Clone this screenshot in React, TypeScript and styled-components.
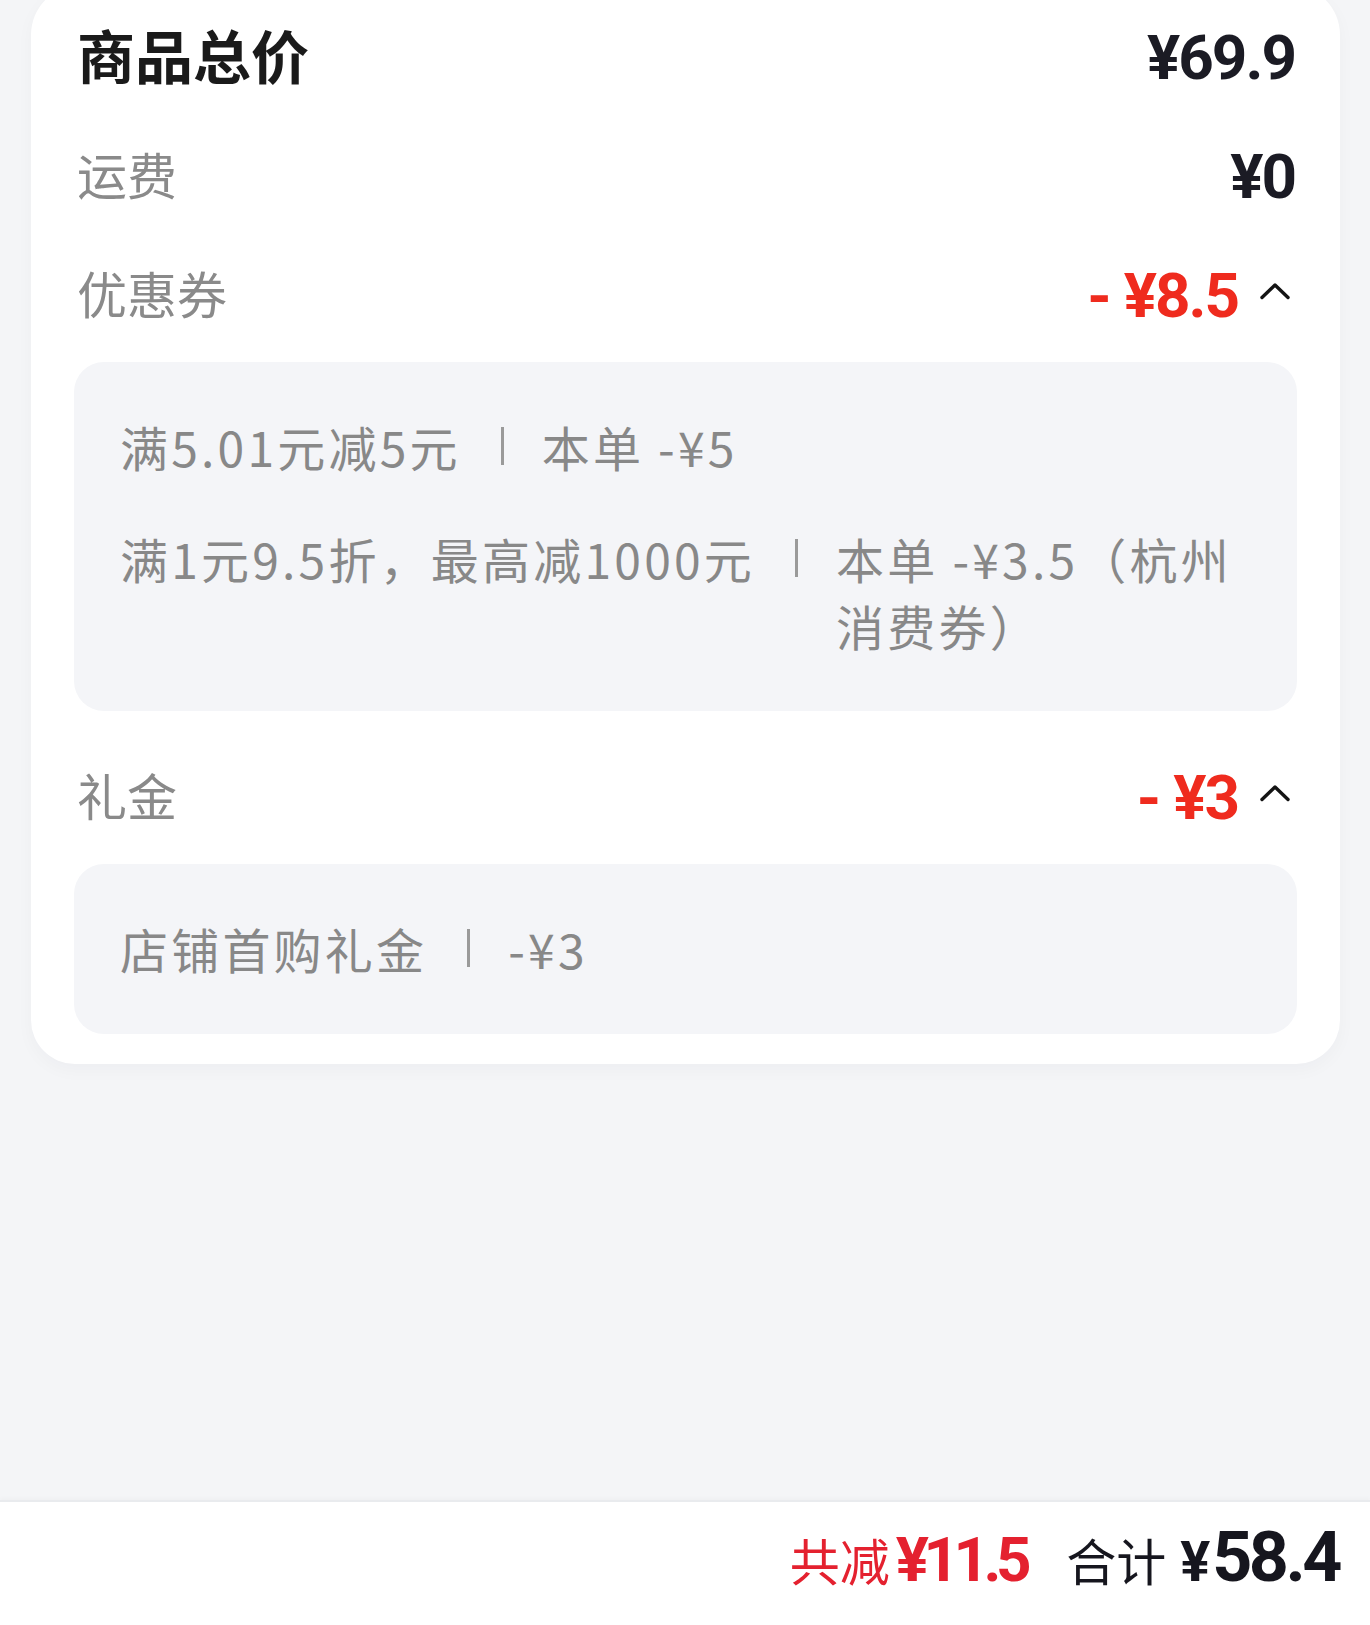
import React from 'react'
import styled, { createGlobalStyle } from 'styled-components'

const GlobalStyle = createGlobalStyle`
  html, body {
    margin: 0;
    padding: 0;
    background: #f4f5f7;
  }
  body {
    font-family: 'Noto Sans CJK SC', 'Noto Sans', sans-serif;
    -webkit-font-smoothing: antialiased;
  }
`

const Page = styled.div`
  display: flex;
  flex-direction: column;
  min-height: 1625px;
  overflow: hidden;
`

const Card = styled.div`
  display: flex;
  flex-direction: column;
  gap: 47px;
  margin: -15px 30px 0 31px;
  padding: 33px 43px 30px;
  background: #ffffff;
  border-radius: 0 0 44px 44px;
  border-top-left-radius: 50px;
  border-top-right-radius: 50px;
  box-shadow: 0 6px 18px rgba(20, 30, 60, 0.03);
`

const Section = styled.div`
  display: flex;
  flex-direction: column;
  gap: 34px;
`

const Row = styled.div`
  display: flex;
  align-items: center;
  justify-content: space-between;
  height: 72px;
  padding: 0 2px 0 3px;
`

const Label = styled.span<{ $strong?: boolean }>`
  font-family: 'Noto Sans CJK SC', sans-serif;
  font-size: ${({ $strong }) => ($strong ? '58px' : '50px')};
  font-weight: ${({ $strong }) => ($strong ? 700 : 400)};
  color: ${({ $strong }) => ($strong ? '#1a1a1a' : '#8a8a8a')};
  line-height: 72px;
`

const Value = styled.div`
  display: flex;
  align-items: center;
`

const Price = styled.span<{ $red?: boolean }>`
  font-family: Roboto, 'Noto Sans', sans-serif;
  font-size: 62px;
  font-weight: 700;
  letter-spacing: -2px;
  line-height: 72px;
  padding-top: 7px;
  color: ${({ $red }) => ($red ? '#ef2b1e' : '#1b1b24')};
`

const Minus = styled.span`
  margin-right: 14px;
`

const Toggle = styled.span`
  display: flex;
  align-items: center;
  justify-content: center;
  width: 34px;
  margin: -2px 3px 0 20px;
`

const DetailBox = styled.div`
  display: flex;
  flex-direction: column;
  gap: 45px;
  padding: 51px 46px 52px;
  background: #f4f5f8;
  border-radius: 30px;
`

const DetailLine = styled.div`
  display: flex;
  align-items: flex-start;
  font-family: 'Noto Sans CJK SC', sans-serif;
  font-size: 48px;
  line-height: 67px;
  letter-spacing: 3.2px;
  color: #888888;
`

const RuleText = styled.span`
  flex-shrink: 0;
  white-space: nowrap;
`

const Divider = styled.span`
  flex-shrink: 0;
  width: 3px;
  height: 38px;
  margin: 14px 38px 0 40px;
  background: #9a9a9a;
`

const SaveText = styled.span`
  flex: 1;
  min-width: 0;
`

const Spacer = styled.div`
  flex: 1;
`

const BottomBar = styled.div`
  display: flex;
  align-items: baseline;
  justify-content: flex-end;
  height: 125px;
  box-sizing: border-box;
  padding: 14px 31px 0 0;
  background: #ffffff;
  border-top: 2px solid #e9ebee;
  box-shadow: 0 -2px 4px rgba(0, 0, 0, 0.025);
`

const SaveLabel = styled.span`
  font-family: 'Noto Sans CJK SC', sans-serif;
  font-size: 50px;
  color: #e4212f;
`

const SaveAmount = styled.span`
  font-family: Roboto, sans-serif;
  font-size: 62px;
  font-weight: 700;
  letter-spacing: -5.5px;
  color: #e4212f;
  margin-left: 6px;
`

const TotalLabel = styled.span`
  font-family: 'Noto Sans CJK SC', sans-serif;
  font-size: 50px;
  color: #16161e;
  margin-left: 40px;
`

const Yen = styled.span`
  font-family: Roboto, sans-serif;
  font-size: 56px;
  font-weight: 700;
  color: #16161e;
  margin-left: 14px;
`

const TotalAmount = styled.span`
  font-family: Roboto, sans-serif;
  font-size: 70px;
  font-weight: 700;
  letter-spacing: -3.5px;
  color: #16161e;
  margin-left: 2px;
`

const ChevronUp = () => (
  <svg width="32" height="18" viewBox="0 0 32 18" fill="none">
    <polyline
      points="3,15.5 16,3 29,15.5"
      stroke="#141414"
      strokeWidth="3.4"
      strokeLinecap="round"
      strokeLinejoin="round"
    />
  </svg>
)

const coupons = [
  { rule: '满5.01元减5元', save: '本单 -¥5' },
  { rule: '满1元9.5折，最高减1000元', save: '本单 -¥3.5（杭州消费券）' },
]

const gifts = [{ rule: '店铺首购礼金', save: '-¥3' }]

type Detail = { rule: string; save: string }

function DiscountSection({ label, amount, items }: { label: string; amount: string; items: Detail[] }) {
  return (
    <Section>
      <Row>
        <Label>{label}</Label>
        <Value>
          <Price $red>
            <Minus>-</Minus>¥{amount}
          </Price>
          <Toggle>
            <ChevronUp />
          </Toggle>
        </Value>
      </Row>
      <DetailBox>
        {items.map((item) => (
          <DetailLine key={item.rule}>
            <RuleText>{item.rule}</RuleText>
            <Divider />
            <SaveText>{item.save}</SaveText>
          </DetailLine>
        ))}
      </DetailBox>
    </Section>
  )
}

export default function App() {
  return (
    <Page>
      <GlobalStyle />
      <Card>
        <Row>
          <Label $strong>商品总价</Label>
          <Price>¥69.9</Price>
        </Row>
        <Row>
          <Label>运费</Label>
          <Price>¥0</Price>
        </Row>
        <DiscountSection label="优惠券" amount="8.5" items={coupons} />
        <DiscountSection label="礼金" amount="3" items={gifts} />
      </Card>
      <Spacer />
      <BottomBar>
        <SaveLabel>共减</SaveLabel>
        <SaveAmount>¥11.5</SaveAmount>
        <TotalLabel>合计</TotalLabel>
        <Yen>¥</Yen>
        <TotalAmount>58.4</TotalAmount>
      </BottomBar>
    </Page>
  )
}
